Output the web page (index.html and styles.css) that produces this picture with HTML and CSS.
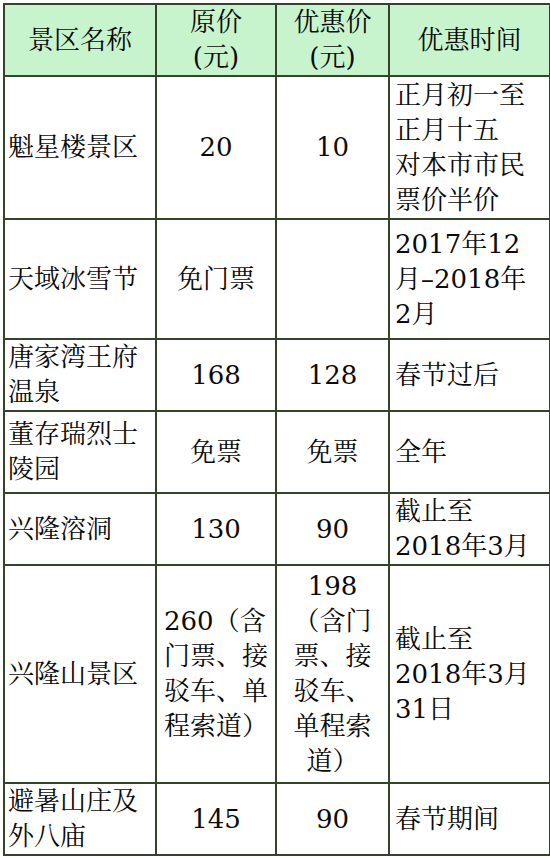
FILE: index.html
```html
<!DOCTYPE html>
<html lang="zh-CN">
<head>
<meta charset="utf-8">
<title>景区优惠</title>
<link rel="stylesheet" href="styles.css">
</head>
<body>
<table class="price-table">
  <colgroup>
    <col class="c1"><col class="c2"><col class="c3"><col class="c4">
  </colgroup>
  <thead>
    <tr class="r-head">
      <th>景区名称</th>
      <th>原价<br>(元)</th>
      <th>优惠价<br>(元)</th>
      <th>优惠时间</th>
    </tr>
  </thead>
  <tbody>
    <tr class="r1">
      <td class="name">魁星楼景区</td>
      <td class="num">20</td>
      <td class="num">10</td>
      <td class="time">正月初一至<br>正月十五<br>对本市市民<br>票价半价</td>
    </tr>
    <tr class="r2">
      <td class="name">天域冰雪节</td>
      <td class="num">免门票</td>
      <td class="num"></td>
      <td class="time">2017年12<br>月–2018年<br>2月</td>
    </tr>
    <tr class="r3">
      <td class="name">唐家湾王府<br>温泉</td>
      <td class="num">168</td>
      <td class="num">128</td>
      <td class="time">春节过后</td>
    </tr>
    <tr class="r4">
      <td class="name">董存瑞烈士<br>陵园</td>
      <td class="num">免票</td>
      <td class="num">免票</td>
      <td class="time">全年</td>
    </tr>
    <tr class="r5">
      <td class="name">兴隆溶洞</td>
      <td class="num">130</td>
      <td class="num">90</td>
      <td class="time">截止至<br>2018年3月</td>
    </tr>
    <tr class="r6">
      <td class="name">兴隆山景区</td>
      <td class="left">260（含<br>门票、接<br>驳车、单<br>程索道）</td>
      <td class="num">198<br>（含门<br>票、接<br>驳车、<br>单程索<br>道）</td>
      <td class="time">截止至<br>2018年3月<br>31日</td>
    </tr>
    <tr class="r7">
      <td class="name">避暑山庄及<br>外八庙</td>
      <td class="num">145</td>
      <td class="num">90</td>
      <td class="time">春节期间</td>
    </tr>
  </tbody>
</table>
</body>
</html>
```

FILE: styles.css
```css
html, body {
  margin: 0;
  padding: 0;
  background: #ffffff;
}

body {
  padding: 3px 0 0 3px;
}

.price-table {
  border-collapse: collapse;
  table-layout: fixed;
  width: 546px;
  font-family: "DejaVu Serif", "Noto Serif CJK SC", "Noto Sans CJK SC", serif;
  font-size: 26px;
  line-height: 35px;
  color: #0a0a0a;
}

.c1 { width: 152px; }
.c2 { width: 120px; }
.c3 { width: 113px; }
.c4 { width: 161px; }

.price-table th,
.price-table td {
  border: 2px solid #35432b;
  padding: 0;
  vertical-align: middle;
  overflow: hidden;
  white-space: nowrap;
}

.price-table th {
  background: #c8f4cd;
  font-weight: normal;
  text-align: center;
}

.r-head { height: 72px; }
.r1 { height: 143px; }
.r2 { height: 120px; }
.r3 { height: 72px; }
.r4 { height: 82px; }
.r5 { height: 72px; }
.r6 { height: 218px; }
.r7 { height: 71px; }

.name {
  text-align: left;
  padding-left: 3px !important;
}

.num {
  text-align: center;
}

.left {
  text-align: left;
  padding-left: 7px !important;
}

.time {
  text-align: left;
  padding-left: 5px !important;
}
```
